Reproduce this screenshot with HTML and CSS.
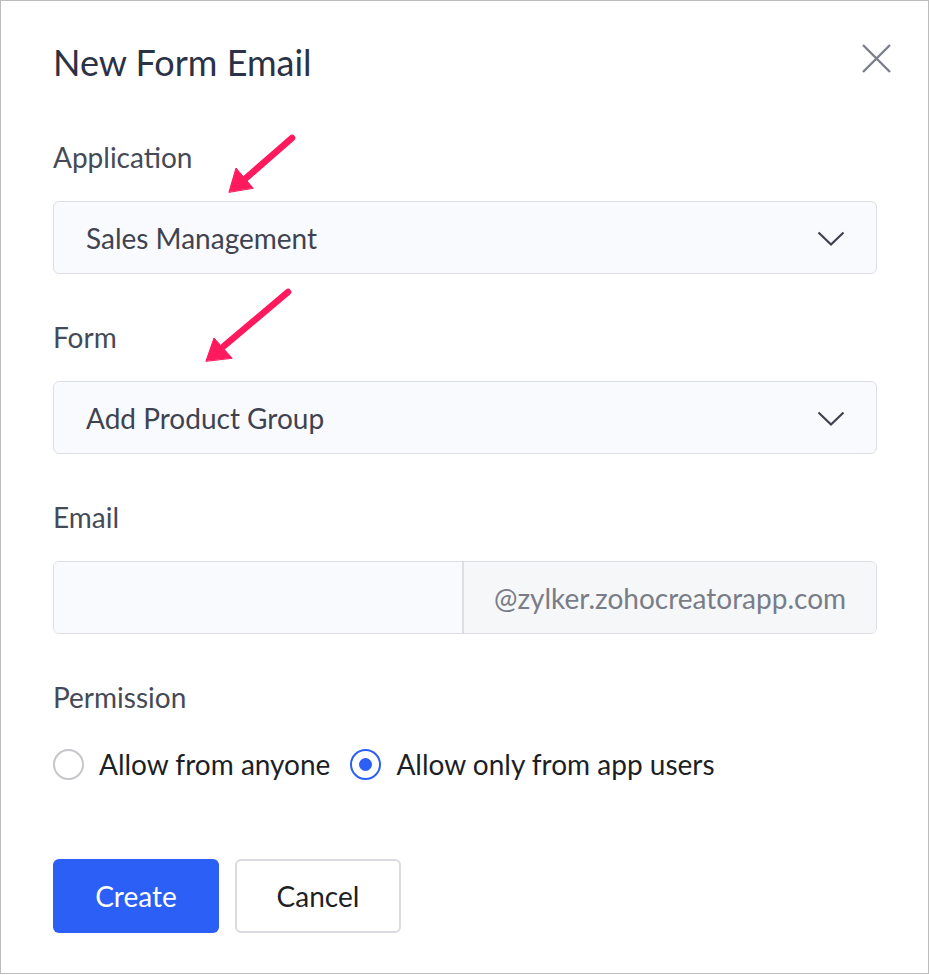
FILE: index.html
```html
<!DOCTYPE html>
<html lang="en">
<head>
<meta charset="utf-8">
<title>New Form Email</title>
<link rel="stylesheet" href="styles.css">
</head>
<body>
<div class="dialog">
  <div class="header">
    <h1 class="title">New Form Email</h1>
    <button class="close" aria-label="Close">
      <svg width="29" height="29" viewBox="0 0 29 29"><path d="M1 1 L28 28 M28 1 L1 28" stroke="#7b7f8c" stroke-width="2.4" fill="none"/></svg>
    </button>
  </div>

  <div class="group">
    <label class="label">Application</label>
    <div class="select">
      <span class="select-text">Sales Management</span>
      <svg class="chevron" width="28" height="16" viewBox="0 0 28 16"><path d="M1.5 1.5 L14 13.5 L26.5 1.5" stroke="#3d4150" stroke-width="2.2" fill="none"/></svg>
    </div>
  </div>

  <div class="group">
    <label class="label">Form</label>
    <div class="select">
      <span class="select-text">Add Product Group</span>
      <svg class="chevron" width="28" height="16" viewBox="0 0 28 16"><path d="M1.5 1.5 L14 13.5 L26.5 1.5" stroke="#3d4150" stroke-width="2.2" fill="none"/></svg>
    </div>
  </div>

  <div class="group">
    <label class="label">Email</label>
    <div class="email">
      <div class="email-input"></div>
      <div class="email-domain">@zylker.zohocreatorapp.com</div>
    </div>
  </div>

  <div class="group perm">
    <label class="label">Permission</label>
    <div class="radios">
      <span class="radio"><span class="circle"></span>Allow from anyone</span>
      <span class="radio"><span class="circle checked"></span>Allow only from app users</span>
    </div>
  </div>

  <div class="actions">
    <button class="btn primary">Create</button>
    <button class="btn secondary">Cancel</button>
  </div>

  <svg class="arrows" width="929" height="975" viewBox="0 0 929 975">
    <g fill="#ff1a5e" stroke="#ff1a5e" stroke-linecap="round">
      <line x1="292" y1="138" x2="245" y2="179" stroke-width="6.5"/>
      <polygon points="229,192 236,168 253,188" stroke-width="1" stroke-linejoin="round"/>
      <line x1="288" y1="292" x2="224" y2="346" stroke-width="6.5"/>
      <polygon points="206,361 214,338 232,358" stroke-width="1" stroke-linejoin="round"/>
    </g>
  </svg>
</div>
</body>
</html>
```

FILE: styles.css
```css
* { box-sizing: border-box; }

html, body {
  margin: 0;
  padding: 0;
  background: #fff;
}

body {
  font-family: Lato, "Open Sans", "Liberation Sans", sans-serif;
}

.dialog {
  position: relative;
  width: 929px;
  height: 974px;
  border: 1px solid #bcbcbc;
  padding: 39px 51px 0 52px;
  display: flex;
  flex-direction: column;
}

.header {
  display: flex;
  justify-content: space-between;
  align-items: flex-start;
  height: 44px;
}

.title {
  margin: 0;
  font-size: 36px;
  font-weight: 400;
  line-height: 44px;
  color: #2b3245;
}

.close {
  border: 0;
  background: none;
  padding: 0;
  margin: 4px -14px 0 0;
  width: 29px;
  height: 29px;
  cursor: pointer;
}

.close svg { display: block; }

.group {
  display: flex;
  flex-direction: column;
  margin-top: 57px;
}

.group + .group { margin-top: 47px; }

.label {
  font-size: 28px;
  line-height: 32px;
  color: #454a57;
  margin-bottom: 28px;
}

.select {
  height: 73px;
  border: 1px solid #dcdee4;
  border-radius: 6px;
  background: #f9fafd;
  display: flex;
  align-items: center;
  justify-content: space-between;
  padding: 0 31px 0 32px;
}

.select-text {
  font-size: 28px;
  color: #3f4350;
}

.chevron { display: block; margin-top: 2px; }

.email {
  height: 73px;
  border: 1px solid #dcdee4;
  border-radius: 6px;
  display: flex;
  overflow: hidden;
}

.email-input {
  width: 410px;
  background: #f9fafd;
  border-right: 2px solid #dcdee4;
}

.email-domain {
  flex: 1;
  background: #f6f7f9;
  display: flex;
  align-items: center;
  padding-left: 30px;
  font-size: 28px;
  color: #797d88;
}

.perm .label { margin-bottom: 35px; }

.radios {
  display: flex;
  gap: 20px;
  height: 32px;
  align-items: center;
}

.radio {
  display: flex;
  align-items: center;
  font-size: 28px;
  color: #1d1f26;
}

.circle {
  width: 31px;
  height: 31px;
  border-radius: 50%;
  border: 2px solid #c6c6cb;
  margin-right: 15px;
  position: relative;
  flex: none;
}

.circle.checked {
  border-color: #2c5ff6;
}

.circle.checked::after {
  content: "";
  position: absolute;
  left: 50%;
  top: 50%;
  width: 13px;
  height: 13px;
  margin: -6.5px 0 0 -6.5px;
  border-radius: 50%;
  background: #2c5ff6;
}

.actions {
  display: flex;
  gap: 16px;
  margin-top: 79px;
}

.btn {
  width: 166px;
  height: 74px;
  border-radius: 6px;
  font-family: inherit;
  font-size: 28px;
  cursor: pointer;
}

.primary {
  background: #2c5ff6;
  border: 0;
  color: #fff;
}

.secondary {
  background: #fff;
  border: 2px solid #dadbe1;
  color: #1d1f26;
}

.arrows {
  position: absolute;
  left: -1px;
  top: -1px;
  pointer-events: none;
}
```
